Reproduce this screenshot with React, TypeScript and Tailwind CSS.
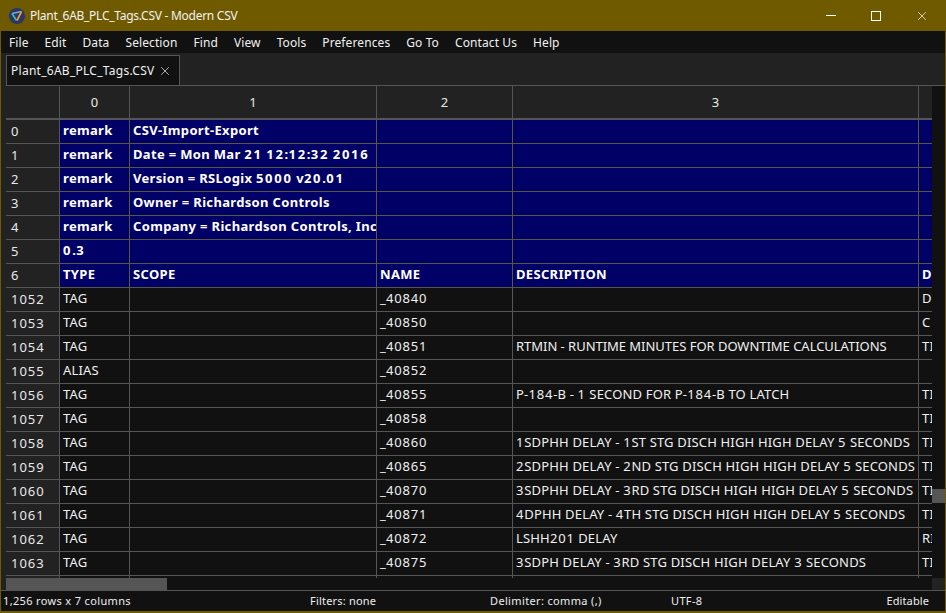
import { X } from "lucide-react";

const menus = ["File", "Edit", "Data", "Selection", "Find", "View", "Tools", "Preferences", "Go To", "Contact Us", "Help"];

const frozen = [
  ["0", "remark", "CSV-Import-Export", "", "", ""],
  ["1", "remark", "Date = Mon Mar 21 12:12:32 2016", "", "", ""],
  ["2", "remark", "Version = RSLogix 5000 v20.01", "", "", ""],
  ["3", "remark", "Owner = Richardson Controls", "", "", ""],
  ["4", "remark", "Company = Richardson Controls, Inc", "", "", ""],
  ["5", "0.3", "", "", "", ""],
  ["6", "TYPE", "SCOPE", "NAME", "DESCRIPTION", "D"],
];

const rows = [
  ["1052", "TAG", "", "_40840", "", "D"],
  ["1053", "TAG", "", "_40850", "", "C"],
  ["1054", "TAG", "", "_40851", "RTMIN - RUNTIME MINUTES FOR DOWNTIME CALCULATIONS", "TI"],
  ["1055", "ALIAS", "", "_40852", "", ""],
  ["1056", "TAG", "", "_40855", "P-184-B - 1 SECOND FOR P-184-B TO LATCH", "TI"],
  ["1057", "TAG", "", "_40858", "", "TI"],
  ["1058", "TAG", "", "_40860", "1SDPHH DELAY - 1ST STG DISCH HIGH HIGH DELAY 5 SECONDS", "TI"],
  ["1059", "TAG", "", "_40865", "2SDPHH DELAY - 2ND STG DISCH HIGH HIGH DELAY 5 SECONDS", "TI"],
  ["1060", "TAG", "", "_40870", "3SDPHH DELAY - 3RD STG DISCH HIGH HIGH DELAY 5 SECONDS", "TI"],
  ["1061", "TAG", "", "_40871", "4DPHH DELAY - 4TH STG DISCH HIGH HIGH DELAY 5 SECONDS", "TI"],
  ["1062", "TAG", "", "_40872", "LSHH201 DELAY", "RI"],
  ["1063", "TAG", "", "_40875", "3SDPH DELAY - 3RD STG DISCH HIGH DELAY 3 SECONDS", "TI"],
];

const colWidths = ["w-[70px]", "w-[247px]", "w-[136px]", "w-[406px]", "w-[13px]"];

function Logo() {
  return (
    <svg width="16" height="16" viewBox="0 0 16 16" className="shrink-0">
      <circle cx="8" cy="8" r="8" fill="#2c3468" />
      <path d="M3 5.5 L12.5 3.5" stroke="#5fb4d8" strokeWidth="1.5" fill="none" />
      <path d="M3 5.5 L7.5 12.5" stroke="#2fc4b8" strokeWidth="1.6" fill="none" />
      <path d="M12.5 3.5 L8 12.5" stroke="#f09a28" strokeWidth="1.7" fill="none" />
    </svg>
  );
}

// the digits in the picture are wider than Noto's, so they get their own tracking
function CellText({ text, bold }: { text: string; bold?: boolean }) {
  return (
    <>
      {text.split(/(\d+)/).map((part, i) =>
        /\d/.test(part) ? (
          <span key={i} className={bold ? "tracking-[1.7px]" : "tracking-[0.8px]"}>
            {part}
          </span>
        ) : (
          part
        )
      )}
    </>
  );
}

function Row({ cells, frozenRow }: { cells: string[]; frozenRow?: boolean }) {
  return (
    <div className="flex h-6 shrink-0">
      <div className="w-[54px] shrink-0 flex items-center pl-[5px] pt-[1px] bg-[#222222] border-r border-b border-[#555555] text-[13px] tracking-[1px] text-[#e8e8e8]">
        {cells[0]}
      </div>
      {cells.slice(1).map((c, i) => (
        <div
          key={i}
          className={`${colWidths[i]} shrink-0 overflow-hidden whitespace-nowrap flex items-center pl-[3px] pb-[1px] border-r border-b text-[13px] ${
            frozenRow
              ? "bg-[#000066] border-[#58583f] font-bold text-white tracking-[0.33px]"
              : `bg-[#111111] border-[#555555] text-[#f0f0f0] ${c.startsWith("RTMIN") ? "tracking-[-0.03px]" : "tracking-[0.17px]"}`
          } ${i === 4 ? "border-r-0" : ""}`}
        >
          <span className="whitespace-pre">
            <CellText text={c} bold={frozenRow} />
          </span>
        </div>
      ))}
    </div>
  );
}

export default function App() {
  return (
    <div className="w-[946px] h-[613px] overflow-hidden flex flex-col bg-[#6f5a00] px-px pb-[2px] font-['Noto_Sans','Open_Sans',sans-serif] text-white">
      <div className="h-[31px] shrink-0 flex items-center pl-[8px]">
        <Logo />
        <span className="ml-[5px] text-[12px] tracking-[-0.27px] text-[#f2f2f2]">Plant_6AB_PLC_Tags.CSV - Modern CSV</span>
        <div className="ml-auto flex items-center">
          <div className="w-[10px] h-px bg-white mr-[35px]" />
          <div className="w-[10px] h-[10px] border border-white mr-[34px]" />
          <X size={14} strokeWidth={1.2} className="mr-[16px]" />
        </div>
      </div>

      <div className="h-[22px] shrink-0 bg-[#111111] flex items-center pl-[8px] pt-[2px] gap-[16px] text-[12px] tracking-[0.1px] text-[#f0f0f0]">
        {menus.map((m) => (
          <span key={m}>{m}</span>
        ))}
      </div>

      <div className="h-[32px] shrink-0 bg-[#222222] flex items-end pl-[5px]">
        <div className="h-[30px] w-[174px] bg-[#111111] border border-b-0 border-[#555555] flex items-center pl-[4px] gap-[3px] text-[12px] tracking-[0.27px] text-[#f0f0f0]">
          Plant_6AB_PLC_Tags.CSV
          <X size={14} strokeWidth={1.2} />
        </div>
      </div>

      <div className="flex-1 min-h-0 flex bg-[#222222] pl-[5px]">
        <div className="flex-1 min-w-0 flex flex-col bg-[#111111] border-t border-[#555555]">
          <div className="h-[34px] shrink-0 flex bg-[#222222] border-b-2 border-[#555555] text-[13px] text-[#e8e8e8]">
            <div className="w-[54px] shrink-0 border-r border-[#555555]" />
            {["0", "1", "2", "3", ""].map((h, i) => (
              <div key={i} className={`${colWidths[i]} shrink-0 flex items-center justify-center pt-[2px] ${i < 4 ? "border-r border-[#555555]" : ""}`}>
                {h}
              </div>
            ))}
          </div>
          {frozen.map((r) => (
            <Row key={r[0]} cells={r} frozenRow />
          ))}
          {rows.map((r) => (
            <Row key={r[0]} cells={r} />
          ))}
          <div className="flex-1 min-h-0 flex">
            <div className="w-[54px] shrink-0 bg-[#222222] border-r border-[#555555]" />
            <div className="w-[70px] shrink-0 border-r border-[#555555]" />
            <div className="w-[247px] shrink-0 border-r border-[#555555]" />
            <div className="w-[136px] shrink-0 border-r border-[#555555]" />
            <div className="w-[406px] shrink-0 border-r border-[#555555]" />
          </div>
          <div className="h-[12px] shrink-0 flex bg-[#111111]">
            <div className="w-[161px] bg-[#555555]" />
          </div>
        </div>
        <div className="w-[13px] shrink-0 flex flex-col bg-[#111111] border-t border-[#555555]">
          <div className="h-[403px]" />
          <div className="h-[14px] bg-[#555555]" />
          <div className="flex-1" />
          <div className="h-[12px] bg-[#222222]" />
        </div>
      </div>

      <div className="h-[21px] shrink-0 bg-[#111111] border-t border-[#555555] grid grid-cols-[307px_180px_181px_1fr] items-center pl-[2px] pr-[16px] text-[11px] tracking-[0.35px] text-[#eeeeee]">
        <span>1,256 rows x 7 columns</span>
        <span className="tracking-[0.2px]">Filters: none</span>
        <span>Delimiter: comma (,)</span>
        <div className="flex justify-between">
          <span>UTF-8</span>
          <span className="tracking-[0.1px]">Editable</span>
        </div>
      </div>
    </div>
  );
}
